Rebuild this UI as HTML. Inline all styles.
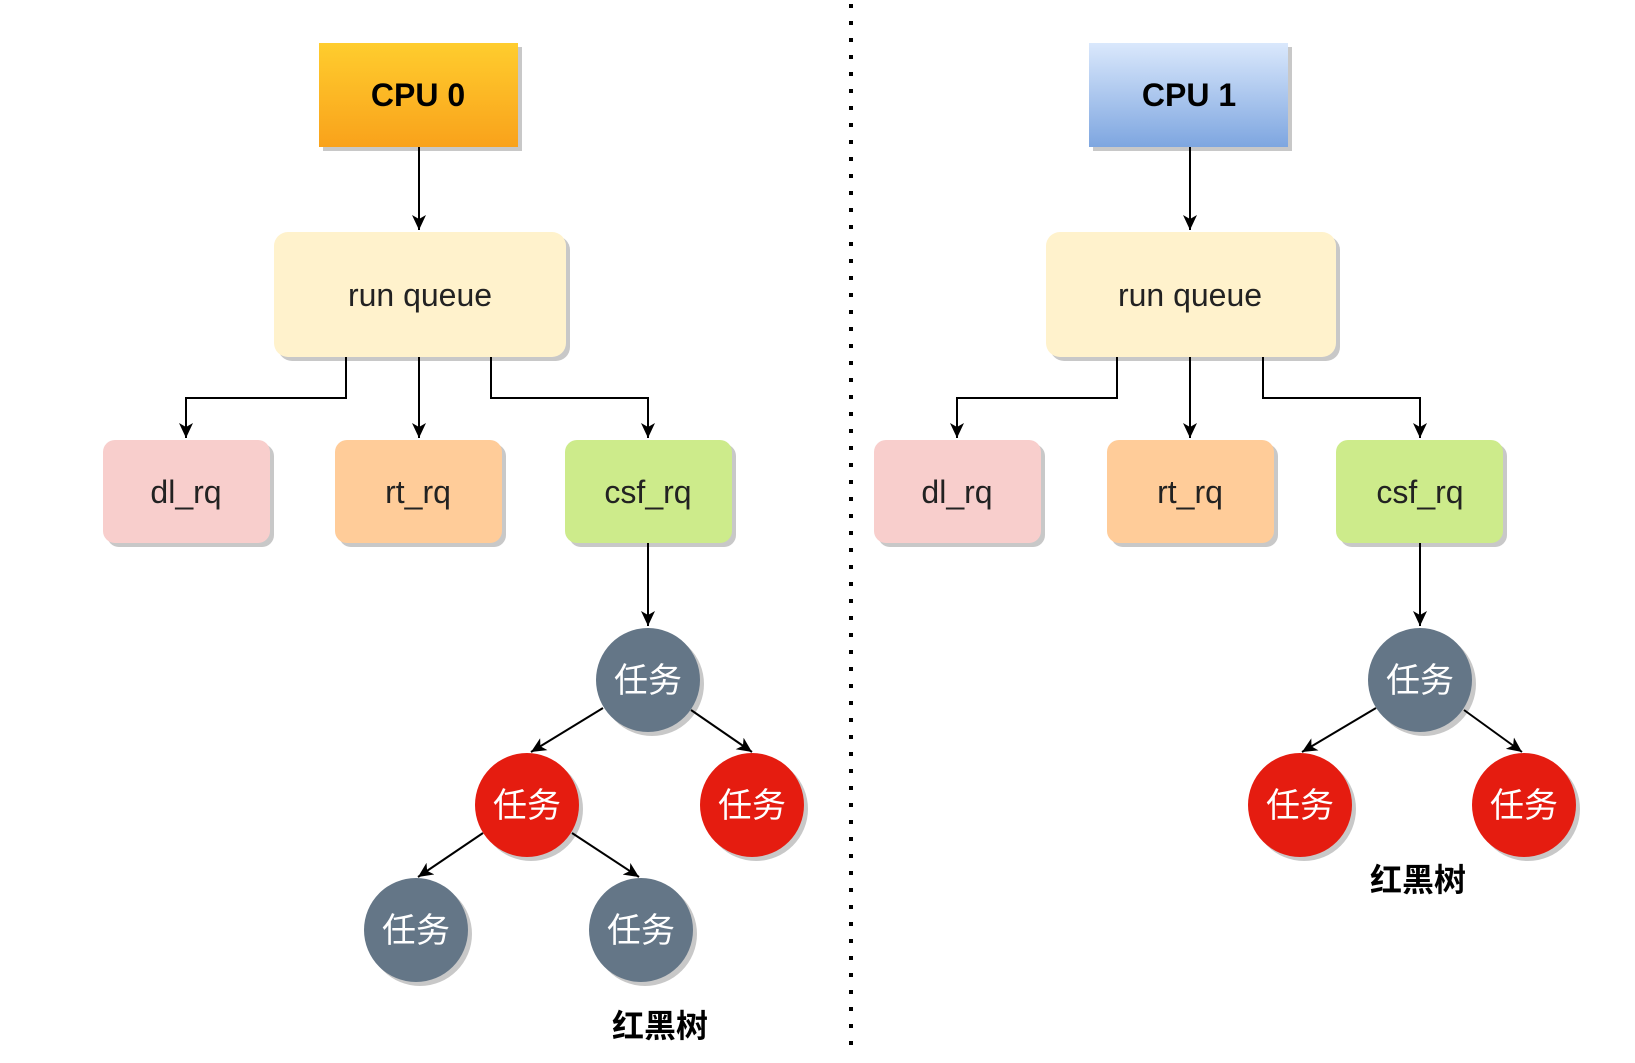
<!DOCTYPE html>
<html><head><meta charset="utf-8"><style>
html,body{margin:0;padding:0;background:#fff;}
svg{display:block}
text{font-family:"Liberation Sans","Noto Sans CJK SC",sans-serif;}
</style></head><body>
<svg width="1635" height="1063" viewBox="0 0 1635 1063" xmlns="http://www.w3.org/2000/svg">
<defs>
<linearGradient id="g0" x1="0" y1="0" x2="0" y2="1"><stop offset="0" stop-color="#ffcd2e"/><stop offset="1" stop-color="#f9a21b"/></linearGradient>
<linearGradient id="g1" x1="0" y1="0" x2="0" y2="1"><stop offset="0" stop-color="#dae8fc"/><stop offset="1" stop-color="#7ea6e0"/></linearGradient>
<marker id="a" markerWidth="16" markerHeight="14" refX="15" refY="7" orient="auto" markerUnits="userSpaceOnUse"><path d="M0,0 L15,7 L0,14 L4,7 Z" fill="#000"/></marker>
</defs>
<line x1="851" y1="4" x2="851" y2="1050" stroke="#000" stroke-width="4" stroke-dasharray="4 13"/>

<g>
<g fill="#c8c8c8">
<rect x="323" y="47" width="199" height="104"/>
<rect x="278" y="236" width="292" height="125" rx="14"/>
<rect x="107" y="444" width="167" height="103" rx="12"/>
<rect x="339" y="444" width="167" height="103" rx="12"/>
<rect x="569" y="444" width="167" height="103" rx="12"/>
<circle cx="652" cy="684" r="52"/><circle cx="531" cy="809" r="52"/><circle cx="756" cy="809" r="52"/><circle cx="420" cy="934" r="52"/><circle cx="645" cy="934" r="52"/>
</g>
<rect x="319" y="43" width="199" height="104" fill="url(#g0)"/>
<text x="418" y="106" text-anchor="middle" font-size="32" font-weight="bold">CPU 0</text>
<rect x="274" y="232" width="292" height="125" rx="14" fill="#fff2cc"/>
<text x="420" y="306" text-anchor="middle" font-size="32" fill="#222">run queue</text>
<rect x="103" y="440" width="167" height="103" rx="12" fill="#f8cecc"/>
<text x="186" y="503" text-anchor="middle" font-size="32" fill="#222">dl_rq</text>
<rect x="335" y="440" width="167" height="103" rx="12" fill="#ffcc99"/>
<text x="418" y="503" text-anchor="middle" font-size="32" fill="#222">rt_rq</text>
<rect x="565" y="440" width="167" height="103" rx="12" fill="#cdeb8b"/>
<text x="648" y="503" text-anchor="middle" font-size="32" fill="#222">csf_rq</text>
<g stroke="#000" stroke-width="2" fill="none" marker-end="url(#a)">
<line x1="419" y1="147" x2="419" y2="230"/>
<polyline points="346,357 346,398 186,398 186,438"/>
<line x1="419" y1="357" x2="419" y2="438"/>
<polyline points="491,357 491,398 648,398 648,438"/>
<line x1="648" y1="543" x2="648" y2="626"/>
<line x1="603" y1="708" x2="531" y2="752"/>
<line x1="691" y1="710" x2="752" y2="752"/>
<line x1="483" y1="833" x2="418" y2="877"/>
<line x1="572" y1="833" x2="639" y2="877"/>
</g>
<circle cx="648" cy="680" r="52" fill="#647687"/>
<circle cx="527" cy="805" r="52" fill="#e51c10"/>
<circle cx="752" cy="805" r="52" fill="#e51c10"/>
<circle cx="416" cy="930" r="52" fill="#647687"/>
<circle cx="641" cy="930" r="52" fill="#647687"/>
<g fill="#fff" font-size="34" text-anchor="middle">
<text x="648" y="692">任务</text><text x="527" y="817">任务</text><text x="752" y="817">任务</text><text x="416" y="942">任务</text><text x="641" y="942">任务</text>
</g>
<text x="660" y="1037" text-anchor="middle" font-size="32" font-weight="bold">红黑树</text>
</g>

<g>
<g fill="#c8c8c8">
<rect x="1093" y="47" width="199" height="104"/>
<rect x="1050" y="236" width="290" height="125" rx="14"/>
<rect x="878" y="444" width="167" height="103" rx="12"/>
<rect x="1111" y="444" width="167" height="103" rx="12"/>
<rect x="1340" y="444" width="167" height="103" rx="12"/>
<circle cx="1424" cy="684" r="52"/><circle cx="1304" cy="809" r="52"/><circle cx="1528" cy="809" r="52"/>
</g>
<rect x="1089" y="43" width="199" height="104" fill="url(#g1)"/>
<text x="1189" y="106" text-anchor="middle" font-size="32" font-weight="bold">CPU 1</text>
<rect x="1046" y="232" width="290" height="125" rx="14" fill="#fff2cc"/>
<text x="1190" y="306" text-anchor="middle" font-size="32" fill="#222">run queue</text>
<rect x="874" y="440" width="167" height="103" rx="12" fill="#f8cecc"/>
<text x="957" y="503" text-anchor="middle" font-size="32" fill="#222">dl_rq</text>
<rect x="1107" y="440" width="167" height="103" rx="12" fill="#ffcc99"/>
<text x="1190" y="503" text-anchor="middle" font-size="32" fill="#222">rt_rq</text>
<rect x="1336" y="440" width="167" height="103" rx="12" fill="#cdeb8b"/>
<text x="1420" y="503" text-anchor="middle" font-size="32" fill="#222">csf_rq</text>
<g stroke="#000" stroke-width="2" fill="none" marker-end="url(#a)">
<line x1="1190" y1="147" x2="1190" y2="230"/>
<polyline points="1117,357 1117,398 957,398 957,438"/>
<line x1="1190" y1="357" x2="1190" y2="438"/>
<polyline points="1263,357 1263,398 1420,398 1420,438"/>
<line x1="1420" y1="543" x2="1420" y2="626"/>
<line x1="1376" y1="708" x2="1302" y2="752"/>
<line x1="1464" y1="710" x2="1522" y2="752"/>
</g>
<circle cx="1420" cy="680" r="52" fill="#647687"/>
<circle cx="1300" cy="805" r="52" fill="#e51c10"/>
<circle cx="1524" cy="805" r="52" fill="#e51c10"/>
<g fill="#fff" font-size="34" text-anchor="middle">
<text x="1420" y="692">任务</text><text x="1300" y="817">任务</text><text x="1524" y="817">任务</text>
</g>
<text x="1418" y="891" text-anchor="middle" font-size="32" font-weight="bold">红黑树</text>
</g>
</svg>
</body></html>
